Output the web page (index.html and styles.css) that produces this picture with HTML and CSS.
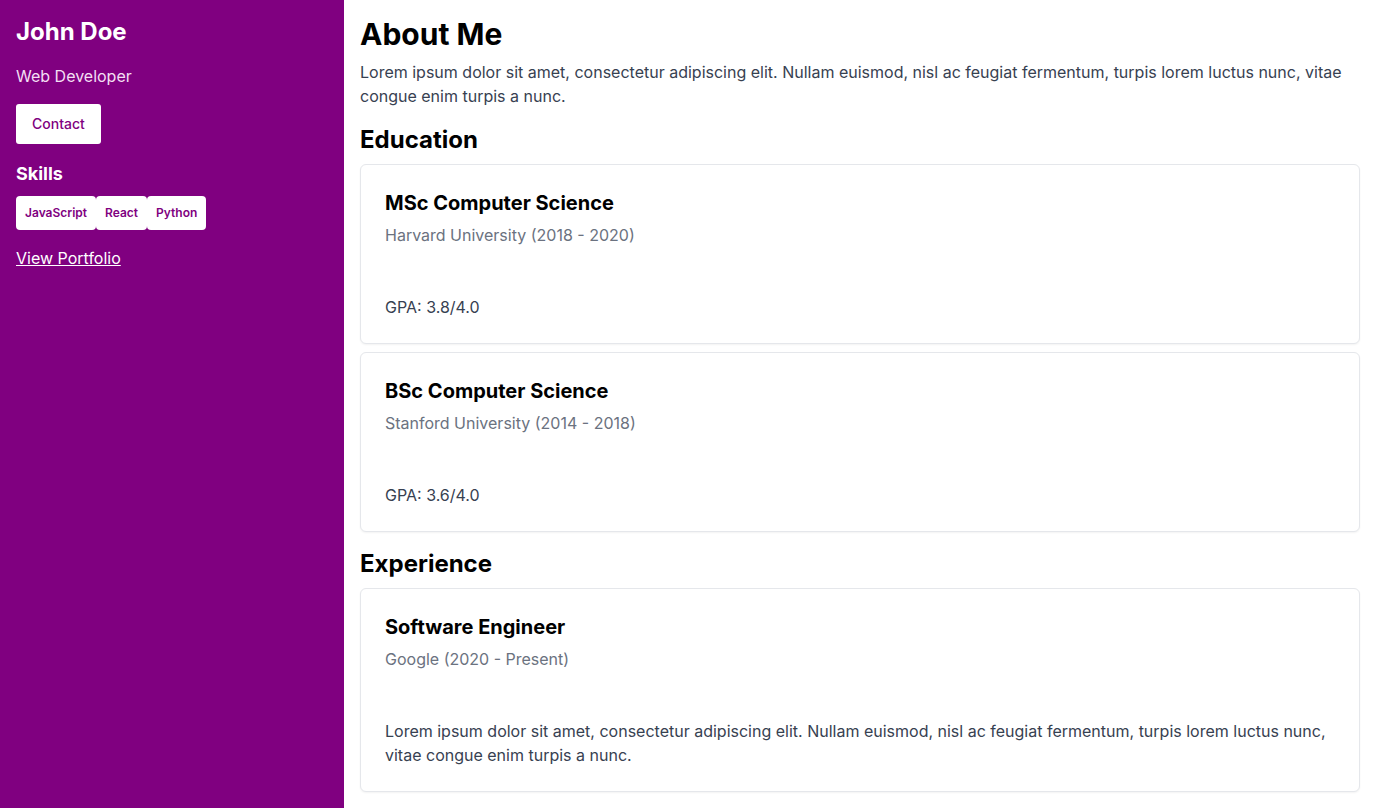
FILE: index.html
```html
<!DOCTYPE html>
<html lang="en">
<head>
<meta charset="utf-8">
<title>John Doe</title>
<link rel="stylesheet" href="styles.css">
</head>
<body>
<div class="layout">
  <aside class="sidebar">
    <h1 class="name">John Doe</h1>
    <p class="role">Web Developer</p>
    <button class="contact">Contact</button>
    <h2 class="skills-title">Skills</h2>
    <div class="tags">
      <span class="tag">JavaScript</span>
      <span class="tag">React</span>
      <span class="tag">Python</span>
    </div>
    <a class="portfolio" href="#">View Portfolio</a>
  </aside>
  <main class="main">
    <h1 class="page-title">About Me</h1>
    <p class="about">Lorem ipsum dolor sit amet, consectetur adipiscing elit. Nullam euismod, nisl ac feugiat fermentum, turpis lorem luctus nunc, vitae congue enim turpis a nunc.</p>

    <h2 class="section-title">Education</h2>
    <div class="cards">
      <div class="card">
        <h3 class="card-title">MSc Computer Science</h3>
        <p class="card-sub">Harvard University (2018 - 2020)</p>
        <p class="card-body">GPA: 3.8/4.0</p>
      </div>
      <div class="card">
        <h3 class="card-title">BSc Computer Science</h3>
        <p class="card-sub">Stanford University (2014 - 2018)</p>
        <p class="card-body">GPA: 3.6/4.0</p>
      </div>
    </div>

    <h2 class="section-title">Experience</h2>
    <div class="cards">
      <div class="card">
        <h3 class="card-title">Software Engineer</h3>
        <p class="card-sub">Google (2020 - Present)</p>
        <p class="card-body">Lorem ipsum dolor sit amet, consectetur adipiscing elit. Nullam euismod, nisl ac feugiat fermentum, turpis lorem luctus nunc, vitae congue enim turpis a nunc.</p>
      </div>
    </div>
  </main>
</div>
</body>
</html>
```
FILE: styles.css
```css
* { box-sizing: border-box; }
html, body { margin: 0; padding: 0; }
body {
  font-family: Inter, "Noto Sans", sans-serif;
  color: #000;
  background: #fff;
}
h1, h2, h3, p { margin: 0; }

.layout {
  display: flex;
  min-height: 808px;
}

.sidebar {
  width: 344px;
  flex: 0 0 344px;
  background: #800080;
  color: #fff;
  padding: 16px;
  display: flex;
  flex-direction: column;
  align-items: flex-start;
}
.name {
  font-size: 24px;
  line-height: 32px;
  font-weight: 700;
}
.role {
  margin-top: 16px;
  font-size: 16px;
  line-height: 24px;
  color: #f3dff3;
}
.contact {
  margin-top: 16px;
  font-family: inherit;
  font-size: 14px;
  line-height: 20px;
  font-weight: 500;
  color: #800080;
  background: #fff;
  border: none;
  border-radius: 3px;
  padding: 10px 16px;
}
.skills-title {
  margin-top: 16px;
  font-size: 18px;
  line-height: 28px;
  font-weight: 700;
}
.tags {
  margin-top: 8px;
  display: flex;
}
.tag {
  background: #fff;
  color: #800080;
  font-size: 12px;
  line-height: 16px;
  font-weight: 600;
  padding: 9px 9px;
  border-radius: 4px;
}
.portfolio {
  margin-top: 16px;
  color: #fff;
  font-size: 16px;
  line-height: 24px;
  text-decoration: underline;
}

.main {
  flex: 1;
  padding: 16px;
}
.page-title {
  font-size: 30px;
  line-height: 36px;
  font-weight: 700;
}
.about {
  margin-top: 8px;
  font-size: 16px;
  line-height: 24px;
  color: #374151;
}
.section-title {
  margin-top: 16px;
  font-size: 24px;
  line-height: 32px;
  font-weight: 700;
}
.cards {
  margin-top: 8px;
  display: flex;
  flex-direction: column;
  gap: 8px;
}
.card {
  border: 1px solid #e5e7eb;
  border-radius: 6px;
  box-shadow: 0 1px 2px rgba(0,0,0,0.05);
  padding: 24px;
  background: #fff;
}
.card-title {
  font-size: 20px;
  line-height: 28px;
  font-weight: 700;
  color: #000;
}
.card-sub {
  margin-top: 6px;
  font-size: 16px;
  line-height: 24px;
  color: #6b7280;
}
.card-body {
  margin-top: 48px;
  font-size: 16px;
  line-height: 24px;
  color: #374151;
}
```
